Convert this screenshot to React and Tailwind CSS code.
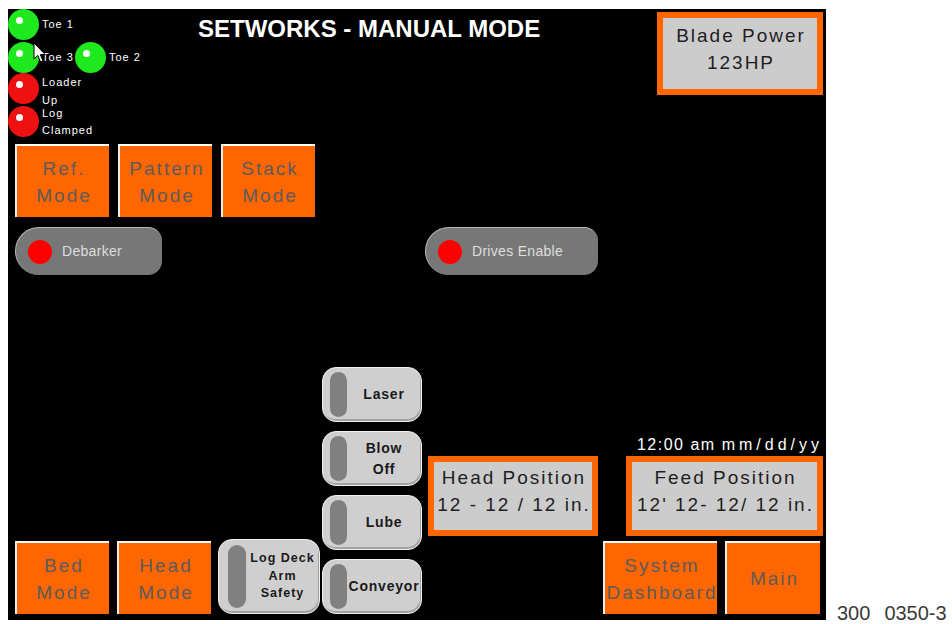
import React from 'react';

// indicator lamp with the little white glint
function Lamp({ color }) {
  return (
    <div className={`w-[31px] h-[31px] shrink-0 rounded-full pl-[8px] pt-[8px] ${color}`}>
      <div className="w-[7px] h-[7px] rounded-full bg-white" />
    </div>
  );
}

function ModeButton({ lines, width }) {
  return (
    <div className={`${width} h-[73px] shrink-0 bg-[#ff6600] border-t-2 border-l-2 border-t-white border-l-[#eeeeee] flex flex-col items-center justify-center pl-[2px] text-[19px] leading-[27px] tracking-[2px] text-[#5c5c5c] whitespace-nowrap`}>
      {lines.map(l => <span key={l}>{l}</span>)}
    </div>
  );
}

function Toggle({ label, width }) {
  return (
    <div className={`${width} h-[48px] shrink-0 rounded-l-[24px] rounded-r-[14px] bg-[#777777] border-t border-l border-[#b8b8b8] flex items-center pl-[12px]`}>
      <div className="w-[24px] h-[24px] rounded-full bg-[#ff0000]" />
      <span className="ml-[10px] text-[14px] tracking-[0.3px] text-[#dedede]">{label}</span>
    </div>
  );
}

function GrayButton({ lines, size }) {
  const big = size === 'big';
  return (
    <div className={`${big ? 'w-[102px] h-[75px] pl-[9px]' : 'w-[100px] h-[55px] pl-[7px]'} shrink-0 rounded-[14px] bg-[#cfcfcf] border border-[#efefef] shadow-[inset_-1px_-2px_0_#a2a2a2] flex items-center`}>
      <div className={`${big ? 'w-[18px] h-[63px]' : 'w-[17px] h-[45px]'} shrink-0 rounded-full bg-[#808080]`} />
      <div className={`flex-1 flex flex-col items-center font-bold text-[#1a1a1a] whitespace-nowrap ${big ? 'text-[12.5px] leading-[17.5px] tracking-[1px]' : 'text-[14px] leading-[21px] tracking-[0.8px]'}`}>
        {lines.map(l => <span key={l}>{l}</span>)}
      </div>
    </div>
  );
}

function ReadoutBox({ lines, width, height, pad }) {
  return (
    <div className={`${width} ${height} ${pad} shrink-0 border-[6px] border-[#ff6600] bg-[#cccccc] flex flex-col items-center pl-[2px] text-[19px] leading-[27px] tracking-[2px] text-[#1e1e1e] whitespace-nowrap`}>
      {lines.map(l => <span key={l}>{l}</span>)}
    </div>
  );
}

export default function App() {
  return (
    <div className="w-[952px] h-[624px] bg-white flex font-['Liberation_Sans',Arial,sans-serif]">
      <div className="relative ml-[8px] mt-[9px] w-[818px] h-[611px] bg-black flex flex-col overflow-hidden">
        {/* top strip */}
        <div className="h-[135px] flex items-start">
          <div className="w-[190px] shrink-0 flex flex-col text-white text-[11px] tracking-[1px]">
            <div className="h-[31px] flex items-center">
              <Lamp color="bg-[#1ee81e]" />
              <span className="ml-[3px]">Toe 1</span>
            </div>
            <div className="h-[31px] mt-[2px] flex items-center">
              <Lamp color="bg-[#1ee81e]" />
              <span className="ml-[3px] w-[33px]">Toe 3</span>
              <Lamp color="bg-[#1ee81e]" />
              <span className="ml-[3px]">Toe 2</span>
            </div>
            <div className="h-[31px] flex items-start">
              <Lamp color="bg-[#ee1111]" />
              <div className="ml-[3px] flex flex-col leading-[18px]">
                <span>Loader</span>
                <span>Up</span>
              </div>
            </div>
            <div className="h-[31px] mt-[2px] flex items-start">
              <Lamp color="bg-[#ee1111]" />
              <div className="ml-[3px] -mt-[1px] flex flex-col leading-[17px]">
                <span>Log</span>
                <span>Clamped</span>
              </div>
            </div>
          </div>
          <h1 className="mt-[8px] text-[24px] leading-[24px] font-bold text-white whitespace-nowrap">
            SETWORKS - MANUAL MODE
          </h1>
          <div className="ml-auto mt-[3px] mr-[3px]">
            <ReadoutBox lines={['Blade Power', '123HP']} width="w-[166px]" height="h-[83px]" pad="pt-[4px]" />
          </div>
        </div>

        {/* mode selectors */}
        <div className="flex pl-[7px] gap-[9px]">
          <ModeButton lines={['Ref.', 'Mode']} width="w-[94px]" />
          <ModeButton lines={['Pattern', 'Mode']} width="w-[94px]" />
          <ModeButton lines={['Stack', 'Mode']} width="w-[94px]" />
        </div>

        {/* toggles */}
        <div className="flex pl-[7px] mt-[10px]">
          <Toggle label="Debarker" width="w-[147px]" />
          <div className="ml-[263px]">
            <Toggle label="Drives Enable" width="w-[173px]" />
          </div>
        </div>

        <div className="flex-1" />

        {/* bottom controls */}
        <div className="flex items-end pl-[7px] pb-[6px]">
          <ModeButton lines={['Bed', 'Mode']} width="w-[94px]" />
          <div className="ml-[8px]">
            <ModeButton lines={['Head', 'Mode']} width="w-[94px]" />
          </div>
          <div className="ml-[7px]">
            <GrayButton lines={['Log Deck', 'Arm', 'Safety']} size="big" />
          </div>
          <div className="ml-[2px] flex flex-col gap-[9px]">
            <GrayButton lines={['Laser']} />
            <GrayButton lines={['Blow', 'Off']} />
            <GrayButton lines={['Lube']} />
            <GrayButton lines={['Conveyor']} />
          </div>
          <div className="ml-[6px] mb-[78px]">
            <ReadoutBox lines={['Head Position', '12 - 12 / 12 in.']} width="w-[170px]" height="h-[80px]" pad="pt-[2px]" />
          </div>
          <div className="ml-[5px] w-[220px] flex flex-col items-end">
            <div className="mb-[3px] text-[16px] leading-[16px] text-white whitespace-pre">
              <span className="tracking-[1.5px]">12:00 am</span>
              <span className="ml-[6px] tracking-[4px]">mm/dd/yy</span>
            </div>
            <ReadoutBox lines={['Feed Position', "12' 12- 12/ 12 in."]} width="w-[197px]" height="h-[80px]" pad="pt-[2px]" />
            <div className="mt-[5px] w-full flex gap-[8px]">
              <ModeButton lines={['System', 'Dashboard']} width="w-[114px]" />
              <ModeButton lines={['Main']} width="w-[95px]" />
            </div>
          </div>
        </div>

        {/* mouse pointer */}
        <svg className="absolute left-[25px] top-[33px]" width="14" height="22" viewBox="0 0 14 22">
          <path d="M1 1 L1 17 L4.8 13.4 L7.6 20 L10 19 L7.3 12.6 L12.3 12.6 Z" fill="white" stroke="black" strokeWidth="1" strokeLinejoin="round" />
        </svg>
      </div>
      <div className="self-end mb-[1px] ml-[11px] text-[20px] leading-[20px] text-[#3a3a3a] whitespace-nowrap">
        <span>300</span>
        <span className="ml-[14px]">0350-3</span>
      </div>
    </div>
  );
}
